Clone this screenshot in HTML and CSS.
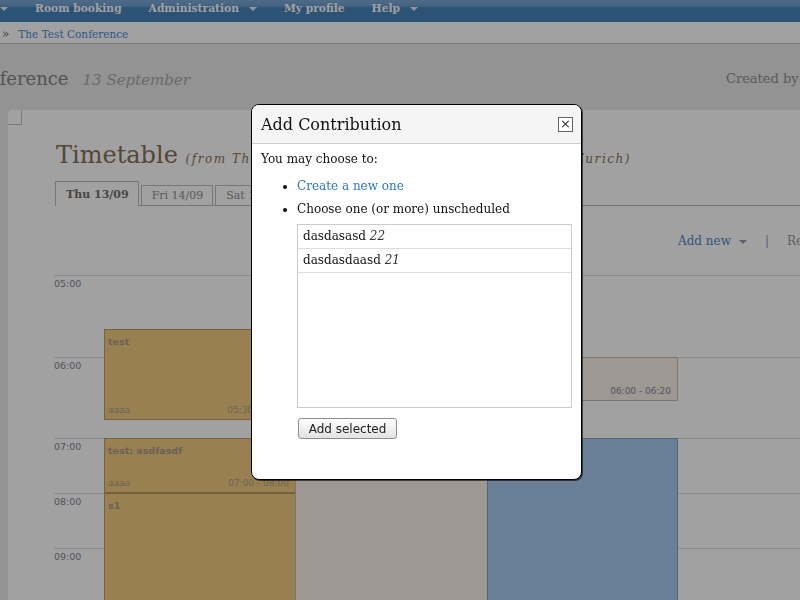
FILE: index.html
```html
<!DOCTYPE html>
<html>
<head>
<meta charset="utf-8">
<link rel="stylesheet" href="styles.css">
</head>
<body>
<div class="nav">
  <span class="caret"></span>
  <a class="nav-item">Room booking</a>
  <a class="nav-item">Administration <span class="caret"></span></a>
  <a class="nav-item">My profile</a>
  <a class="nav-item">Help <span class="caret"></span></a>
</div>
<div class="crumbs"><span class="raquo">»</span><a class="crumb-link">The Test Conference</a></div>
<div class="conf-header">
  <h1 class="conf-title"><span class="conf-name">The Test Conference</span><em class="conf-date">13 September</em></h1>
  <div class="created">Created by Indico Admin</div>
</div>
<div class="content">
  <span class="corner"></span>
  <h2 class="tt-title">Timetable <em class="tt-range">(from Thu 13/09/2012 to Sat 15/09/2012 in Europe/Zurich)</em></h2>
  <div class="tabs">
    <span class="tab active">Thu 13/09</span>
    <span class="tab">Fri 14/09</span>
    <span class="tab">Sat 15/09</span>
  </div>
  <div class="toolbar">
    <a class="tool-link">Add new <span class="caret dark"></span></a>
    <span class="sep">|</span>
    <a class="tool-muted">Reschedule</a>
  </div>
  <div class="grid">
    <div class="hour h-tall"><span class="label">05:00</span></div>
    <div class="hour h-tall2"><span class="label">06:00</span></div>
    <div class="hour h-short"><span class="label">07:00</span></div>
    <div class="hour h-short"><span class="label">08:00</span></div>
    <div class="hour h-short"><span class="label">09:00</span></div>

    <div class="block gold" style="left:50px; top:54px; width:191px; height:91px;">
      <span class="b-title">test</span>
      <div class="b-foot"><em>aaaa</em><span>05:30 - 07:00</span></div>
    </div>
    <div class="block grey" style="left:433px; top:82px; width:191px; height:44px;">
      <span class="b-title"></span>
      <div class="b-foot"><em></em><span>06:00 - 06:20</span></div>
    </div>
    <div class="block gold" style="left:50px; top:163px; width:192px; height:55px;">
      <span class="b-title">test: asdfasdf</span>
      <div class="b-foot"><em>aaaa</em><span>07:00 - 08:00</span></div>
    </div>
    <div class="block gold" style="left:50px; top:218px; width:192px; height:200px;">
      <span class="b-title">s1</span>
    </div>
    <div class="block grey" style="left:241px; top:163px; width:193px; height:200px;"></div>
    <div class="block blue" style="left:433px; top:163px; width:191px; height:200px;"></div>
  </div>
</div>

<div class="backdrop"></div>
<div class="dialog">
  <div class="dialog-head">
    <span class="dialog-title">Add Contribution</span>
    <span class="close">×</span>
  </div>
  <div class="dialog-body">
    <p class="intro">You may choose to:</p>
    <ul class="choices">
      <li><a class="link">Create a new one</a></li>
      <li>Choose one (or more) unscheduled
        <div class="listbox">
          <div class="row">dasdasasd <em>22</em></div>
          <div class="row">dasdasdaasd <em>21</em></div>
        </div>
        <button class="btn">Add selected</button>
      </li>
    </ul>
  </div>
</div>
</body>
</html>
```

FILE: styles.css
```css
* { box-sizing: border-box; }
html, body { margin: 0; padding: 0; }
body {
  width: 800px;
  height: 600px;
  overflow: hidden;
  background: #e9e9e9;
  font-family: "DejaVu Serif", serif;
  color: #222;
  position: relative;
}

/* top navigation */
.nav {
  height: 22px;
  background: linear-gradient(to bottom, #7aaad8 0px, #6e9ecd 6px, #4682ba 8px, #4682ba 100%);
  display: flex;
  align-items: flex-start;
  gap: 27px;
  padding-top: 2px;
  font-size: 10.7px;
  line-height: 13px;
  font-weight: bold;
  color: #ffffff;
  white-space: nowrap;
}
.nav-item { display: flex; align-items: center; }
.caret {
  display: inline-block;
  width: 0;
  height: 0;
  border-left: 4px solid transparent;
  border-right: 4px solid transparent;
  border-top: 4px solid #e8eef4;
  margin-top: 5px;
}
.nav-item .caret { margin-left: 10px; margin-top: 1px; }

/* breadcrumbs */
.crumbs {
  height: 22px;
  background: #ffffff;
  border-bottom: 1px solid #c2c2c2;
  display: flex;
  align-items: center;
  padding-top: 2px;
  font-size: 10.5px;
}
.raquo { color: #666; margin-left: 2px; font-size: 12px; }
.crumb-link { color: #4a8ad4; margin-left: 9px; }

/* conference header (page is scrolled sideways, title starts off-screen) */
.conf-header {
  height: 66px;
  display: flex;
  align-items: center;
  padding-top: 2px;
}
.conf-title {
  flex: 1;
  margin: 0;
  font-weight: normal;
  font-size: 18px;
  color: #858585;
  white-space: nowrap;
}
.conf-name { margin-left: -120px; }
.conf-date { font-size: 15px; margin-left: 14px; color: #a6a6a6; }
.created {
  flex: 0 0 74px;
  width: 74px;
  overflow: hidden;
  white-space: nowrap;
  font-size: 13px;
  color: #8f8f8f;
}

/* main content */
.content {
  position: relative;
  margin-left: 8px;
  background: #ffffff;
  border-top-left-radius: 4px;
  padding: 30px 0 0 47px;
  height: 500px;
}
.corner {
  position: absolute;
  left: 0;
  top: 0;
  width: 14px;
  height: 15px;
  border-right: 1px solid #c2c2c2;
  border-bottom: 1px solid #c2c2c2;
}
.tt-title {
  margin: 0;
  height: 30px;
  font-weight: normal;
  font-size: 24px;
  line-height: 30px;
  color: #86705a;
  white-space: nowrap;
  padding-left: 1px;
}
.tt-range {
  font-size: 12px;
  line-height: 12px;
  letter-spacing: 1.55px;
  margin-left: 0;
  color: #86705a;
}

.tabs {
  margin-top: 11px;
  height: 25px;
  display: flex;
  align-items: flex-end;
  gap: 2px;
  border-bottom: 1px solid #bdbdbd;
  font-size: 11px;
}
.tab {
  height: 20px;
  padding: 0 9px 0 10px;
  border: 1px solid #bdbdbd;
  border-bottom: none;
  display: flex;
  align-items: center;
  color: #8e8e8e;
  background: #ffffff;
  white-space: nowrap;
}
.tab.active {
  height: 25px;
  font-weight: bold;
  color: #6f6f6f;
  margin-bottom: -1px;
  padding: 0 9px 0 10px;
}

.toolbar {
  height: 69px;
  display: flex;
  align-items: center;
  padding-left: 623px;
  font-size: 12px;
  white-space: nowrap;
  padding-top: 1px;
}
.tool-link { color: #4f86c6; display: flex; align-items: center; }
.caret.dark { border-top-color: #8e9aa8; margin: 1px 0 0 8px; }
.sep { color: #7f9fc6; margin-left: 18px; }
.tool-muted { color: #9a9a9a; margin-left: 18px; }

/* grid */
.grid {
  position: relative;
  margin-left: -1px;
}
.hour {
  border-top: 1px solid #dedede;
  font-family: "DejaVu Sans", sans-serif;
  font-size: 9.5px;
  color: #7f8694;
}
.h-tall { height: 82px; }
.h-tall2 { height: 81px; }
.h-short { height: 55px; }
.label { display: block; padding-top: 2px; }

.block {
  position: absolute;
  border: 1px solid rgba(0, 0, 0, 0.22);
  font-family: "DejaVu Sans", sans-serif;
  font-size: 9px;
  color: #a89c88;
  padding: 6px 6px 4px 3px;
  display: flex;
  flex-direction: column;
  justify-content: space-between;
}
.gold { background: #f1cb7f; }
.grey { background: #f9f1e8; color: #7f8797; }
.blue { background: #a8cbf3; }
.b-title { font-weight: bold; font-size: 9.5px; }
.b-foot { display: flex; justify-content: space-between; }
.b-foot em { font-style: italic; }

/* modal */
.backdrop {
  position: fixed;
  inset: 0;
  background: rgba(0, 0, 0, 0.37);
  z-index: 10;
}
.dialog {
  position: fixed;
  left: 251px;
  top: 104px;
  width: 331px;
  height: 376px;
  background: #ffffff;
  border: 1px solid #000;
  border-radius: 8px;
  box-shadow: 1px 1px 0 rgba(0,0,0,0.6);
  overflow: hidden;
  z-index: 20;
  color: #111;
}
.dialog-head {
  height: 39px;
  background: #f5f5f5;
  border-bottom: 1px solid #cccccc;
  display: flex;
  align-items: center;
  justify-content: space-between;
  padding: 0 8px 0 9px;
}
.dialog-title { font-size: 16px; color: #111; }
.close {
  width: 15px;
  height: 15px;
  border: 1px solid #666;
  background: #fff;
  font-family: "DejaVu Sans", sans-serif;
  font-size: 13px;
  line-height: 12px;
  text-align: center;
  color: #333;
}
.dialog-body { padding: 8px 8px 0 9px; font-size: 12px; }
.intro { margin: 0; line-height: 15px; }
.choices { margin: 8px 0 0 0; padding-left: 36px; }
.choices li { line-height: 23px; }
.link { color: #2a78c0; }
.listbox {
  margin-top: 3px;
  width: 275px;
  height: 184px;
  border: 1px solid #cccccc;
}
.row {
  height: 24px;
  line-height: 23px;
  padding-left: 5px;
  border-bottom: 1px solid #dddddd;
}
.row em { color: #333; }
.btn {
  margin: 10px 0 0 1px;
  width: 99px;
  height: 21px;
  padding: 0;
  font-family: "DejaVu Sans", sans-serif;
  font-size: 12px;
  color: #222;
  border: 1px solid #8e8e8e;
  border-radius: 3px;
  background: linear-gradient(to bottom, #ffffff, #e2e2e2);
  display: block;
}
```
